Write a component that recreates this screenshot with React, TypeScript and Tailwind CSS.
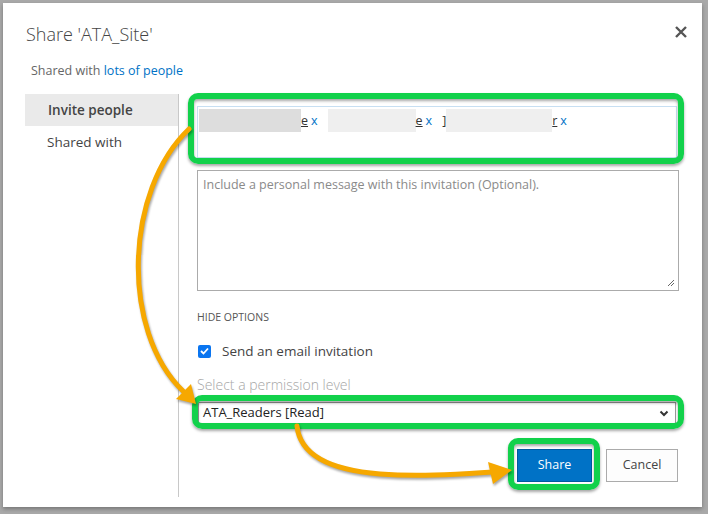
import React from 'react'

const font = { fontFamily: '"Segoe UI", "Open Sans", "Noto Sans", sans-serif' }

function GreenFrame({ className }: { className: string }) {
  return (
    <div
      className={`pointer-events-none absolute rounded-[10px] border-[6px] border-[#12d14b] shadow-[0_2px_3px_rgba(0,0,0,0.35),inset_0_2px_3px_rgba(0,0,0,0.35)] ${className}`}
    />
  )
}

function Chip({ shade, width, tail, lead }: { shade: string; width: string; tail: string; lead?: string }) {
  return (
    <span className="flex items-center">
      {lead && <span className="text-[#333] underline">{lead}</span>}
      <span className={`h-[23px] ${width} ${shade}`} />
      <span className="text-[#333] underline">{tail}</span>
      <span className="ml-[3px] text-[#0072c6]">x</span>
    </span>
  )
}

function Arrows() {
  return (
    <svg
      className="pointer-events-none absolute left-0 top-0 drop-shadow-[1px_2px_1px_rgba(0,0,0,0.35)]"
      width="708"
      height="514"
      viewBox="0 0 708 514"
    >
      <path
        d="M189 129 C125 190 120 330 183 391"
        fill="none"
        stroke="#f6a800"
        strokeWidth="5"
        strokeLinecap="round"
      />
      <path d="M196 404 L176 399 L191 384 Z" fill="#f6a800" />
      <path
        d="M297 426 C300 455 330 470 380 474 C420 477 460 474 492 472"
        fill="none"
        stroke="#f6a800"
        strokeWidth="5"
        strokeLinecap="round"
      />
      <path d="M512 470 L488 462 L493 484 Z" fill="#f6a800" />
    </svg>
  )
}

export default function App() {
  return (
    <div className="relative h-[514px] w-[708px] overflow-hidden bg-[#a9a9a9] pl-[3px] pt-[3px]" style={font}>
      <div className="relative flex h-[504px] w-[699px] flex-col bg-white shadow-[0_2px_4px_rgba(0,0,0,0.3)]">
        {/* header */}
        <div className="flex items-start justify-between pl-[23px] pr-[15px] pt-[18px]">
          <h1 className="text-[18px] font-light leading-[26px] text-[#444]">Share 'ATA_Site'</h1>
          <svg width="12" height="12" viewBox="0 0 12 12" className="mt-[5px]">
            <path d="M1 1 L11 11 M11 1 L1 11" stroke="#555" strokeWidth="2.4" />
          </svg>
        </div>
        <p className="ml-[28px] mt-[15px] text-[12.5px] leading-[18px] text-[#666]">
          Shared with <span className="text-[#0072c6]">lots of people</span>
        </p>

        {/* body */}
        <div className="mt-[14px] flex flex-1 pb-[10px]">
          <nav className="ml-[22px] w-[153px] text-[13.5px] text-[#444]">
            <div className="flex h-[32px] items-center bg-[#eaeaea] pl-[23px] font-semibold">Invite people</div>
            <div className="flex h-[32px] items-center pl-[22px]">Shared with</div>
          </nav>
          <div className="w-px bg-[#c8c8c8]" />
          <div className="flex w-[500px] flex-col pl-[18px]">
            <div className="relative mt-[12px] h-[52px] w-[480px] border border-[#c7dff2] bg-white">
              <div className="flex items-center gap-[10px] pl-[1px] pt-[2px] text-[12.5px] leading-[23px]">
                <Chip shade="bg-[#dddddd]" width="w-[102px]" tail="e" />
                <Chip shade="bg-[#efefef]" width="w-[88px]" tail="e" />
                <Chip shade="bg-[#efefef]" width="w-[106px]" tail="r" lead="]" />
              </div>
              <GreenFrame className="-left-[10px] -right-[8px] -top-[14px] -bottom-[7px]" />
            </div>

            <div className="relative mt-[12px] h-[121px] w-[482px] border border-[#ababab] px-[5px] pt-[5px] text-[12.5px] text-[#8a8a8a]">
              Include a personal message with this invitation (Optional).
              <svg width="8" height="8" viewBox="0 0 8 8" className="absolute bottom-[3px] right-[3px]">
                <path d="M7 1 L1 7 M7 4 L4 7" stroke="#666" strokeWidth="1" />
              </svg>
            </div>

            <div className="mt-[18px] text-[10.5px] leading-[16px] text-[#555]">HIDE OPTIONS</div>

            <div className="mt-[16px] flex items-center">
              <span className="ml-[1px] flex h-[13px] w-[13px] items-center justify-center rounded-[2px] bg-[#0a75f0]">
                <svg width="9" height="8" viewBox="0 0 9 8">
                  <path d="M1 4 L3.5 6.5 L8 1.5" fill="none" stroke="white" strokeWidth="1.8" />
                </svg>
              </span>
              <span className="ml-[11px] text-[13.5px] leading-[20px] text-[#444]">Send an email invitation</span>
            </div>

            <div className="mt-[14px] text-[14px] font-light leading-[20px] text-[#a6a6a6]">Select a permission level</div>

            <div className="relative ml-[1px] mt-[7px] flex h-[22px] w-[478px] items-center justify-between border border-[#999] bg-white pl-[4px] pr-[6px]">
              <span className="text-[13px] text-[#222]">ATA_Readers [Read]</span>
              <svg width="10" height="7" viewBox="0 0 10 7">
                <path d="M1.5 1.5 L5 5 L8.5 1.5" fill="none" stroke="#333" strokeWidth="2" />
              </svg>
              <GreenFrame className="-left-[7px] -right-[9px] -top-[8px] -bottom-[6px]" />
            </div>

            <div className="mt-[25px] flex justify-end gap-[14px] pr-[1px]">
              <div className="relative">
                <button className="h-[33px] w-[75px] border border-[#005a9e] bg-[#0072c6] text-[12.5px] text-white">
                  Share
                </button>
                <GreenFrame className="-left-[9px] -right-[8px] -top-[11px] -bottom-[8px]" />
              </div>
              <button className="h-[33px] w-[72px] border border-[#ababab] bg-[#fdfdfd] text-[12.5px] text-[#444]">
                Cancel
              </button>
            </div>
          </div>
        </div>
      </div>
      <Arrows />
    </div>
  )
}
